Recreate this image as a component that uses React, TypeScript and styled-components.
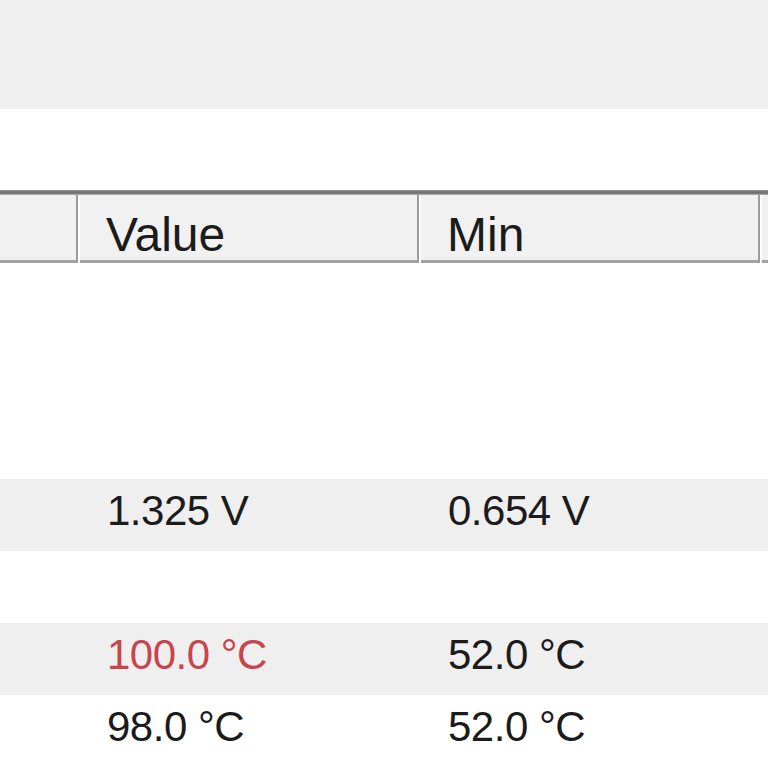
import styled, { createGlobalStyle } from "styled-components";

const GlobalStyle = createGlobalStyle`
  html, body {
    margin: 0;
    padding: 0;
    background: #fff;
    overflow: hidden;
  }
`;

type Reading = {
  value?: string;
  min?: string;
  shaded?: boolean;
  hot?: boolean;
};

const readings: Reading[] = [
  {},
  {},
  {},
  { value: "1.325 V", min: "0.654 V", shaded: true },
  {},
  { value: "100.0 °C", min: "52.0 °C", shaded: true, hot: true },
  { value: "98.0 °C", min: "52.0 °C" },
];

const COLUMNS = "80px 341px 341px 1fr";

export default function App() {
  return (
    <>
      <GlobalStyle />
      <Window>
        <Toolbar />
        <Pane />
        <Table>
          <TopRule />
          <HeaderRow>
            <HeaderCell />
            <HeaderCell>Value</HeaderCell>
            <HeaderCell>Min</HeaderCell>
            <HeaderCell />
          </HeaderRow>
          {readings.map((r, i) => (
            <Row key={i} $shaded={r.shaded}>
              <Cell />
              <Cell $hot={r.hot}>{r.value}</Cell>
              <Cell>{r.min}</Cell>
              <Cell />
            </Row>
          ))}
        </Table>
      </Window>
    </>
  );
}

const Window = styled.div`
  width: 768px;
  height: 768px;
  display: flex;
  flex-direction: column;
  overflow: hidden;
  font-family: "Liberation Sans", Arial, sans-serif;
  color: #1b1b1b;
`;

const Toolbar = styled.div`
  height: 109px;
  flex-shrink: 0;
  background: #f0f0f0;
`;

const Pane = styled.div`
  height: 81px;
  flex-shrink: 0;
  background: #fff;
`;

const Table = styled.div`
  display: flex;
  flex-direction: column;
`;

const TopRule = styled.div`
  height: 5px;
  background: linear-gradient(#9a9a9a, #6c6c6c 40%, #7c7c7c 70%, #b8b8b8);
`;

const HeaderRow = styled.div`
  display: grid;
  grid-template-columns: ${COLUMNS};
  background: #fff;
`;

const HeaderCell = styled.div`
  height: 65px;
  padding-left: 26px;
  margin-right: 2px;
  background: #f1f1f1;
  border-right: 2px solid #9c9c9c;
  border-bottom: 3px solid #a2a2a2;
  font-size: 48px;
  line-height: 80px;
  white-space: nowrap;
  overflow: hidden;

  &:first-child {
    padding-left: 0;
  }
`;

const Row = styled.div<{ $shaded?: boolean }>`
  display: grid;
  grid-template-columns: ${COLUMNS};
  height: 72px;
  background: ${(p) => (p.$shaded ? "#efefef" : "#fff")};
`;

const Cell = styled.div<{ $hot?: boolean }>`
  padding-left: 27px;
  font-size: 42px;
  line-height: 64px;
  letter-spacing: -0.5px;
  white-space: nowrap;
  color: ${(p) => (p.$hot ? "#c9444b" : "#1b1b1b")};

  &:first-child {
    padding-left: 0;
  }
`;
